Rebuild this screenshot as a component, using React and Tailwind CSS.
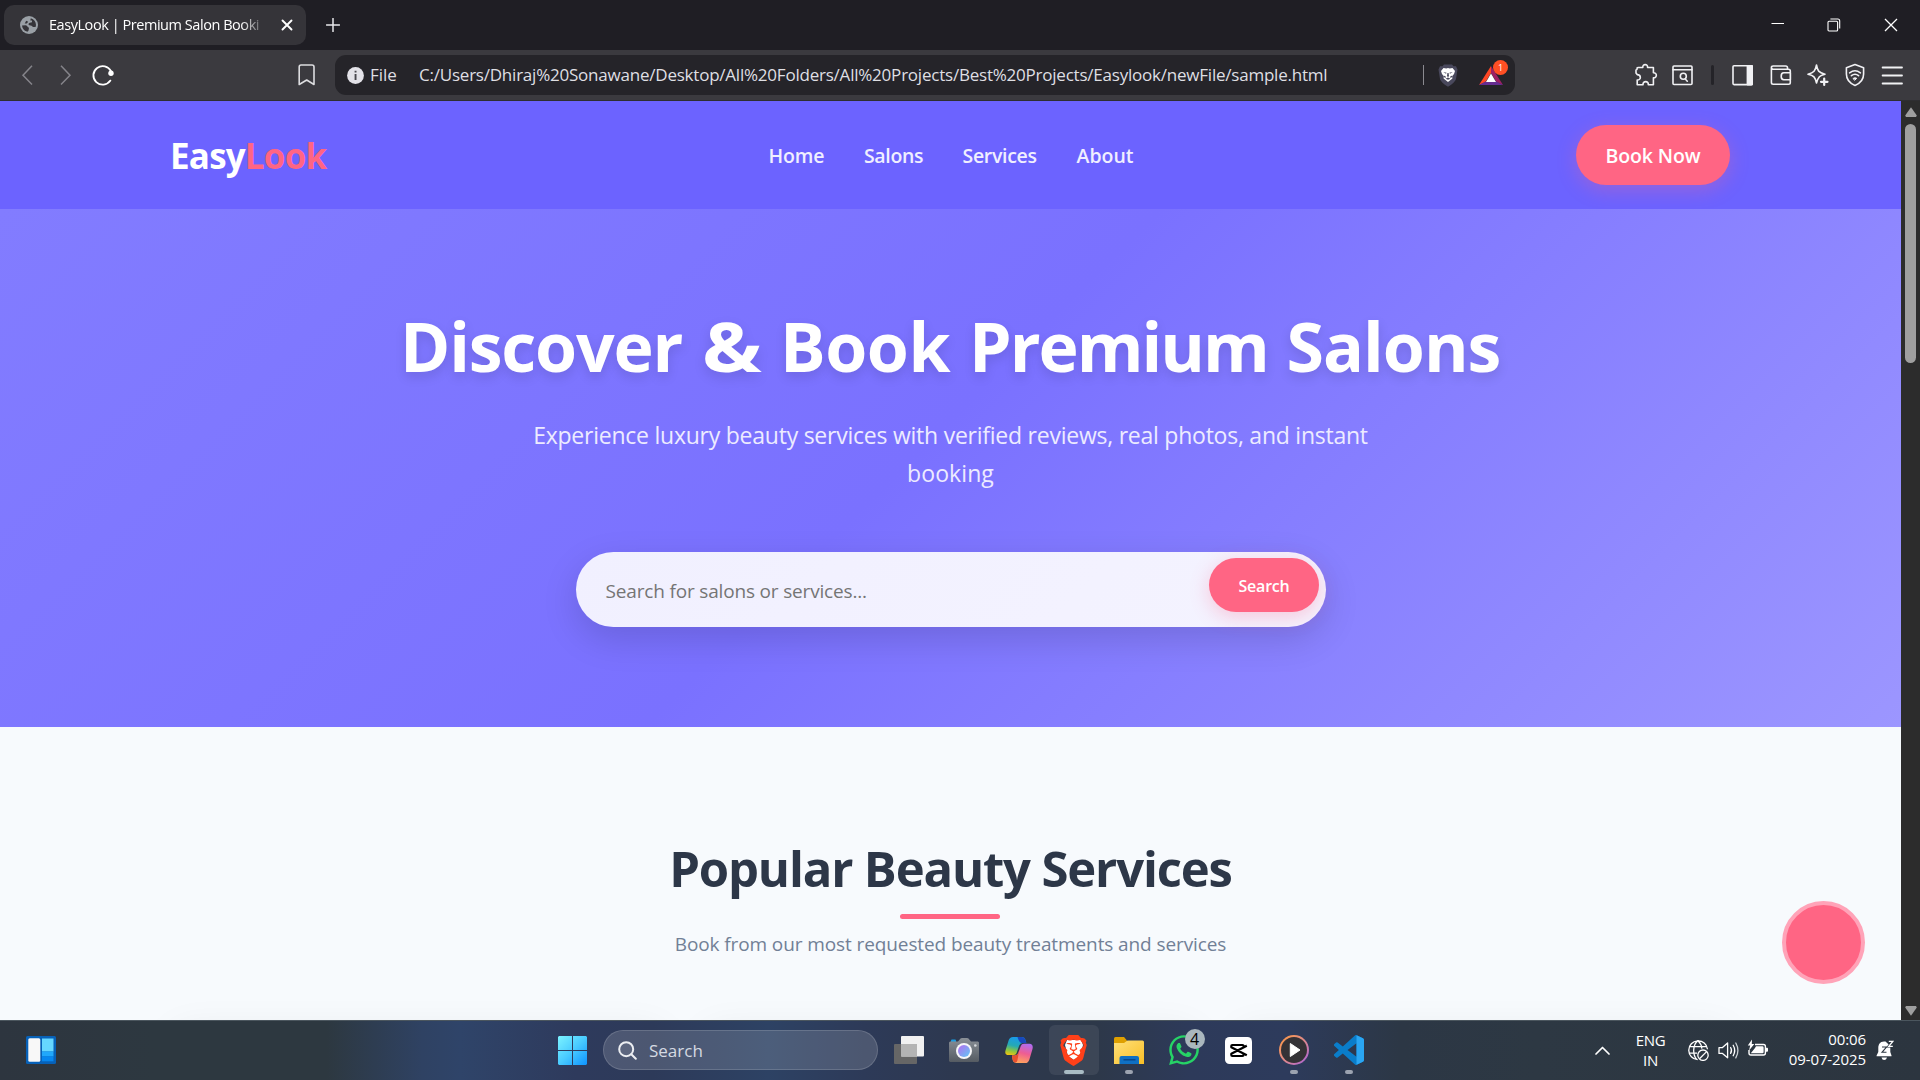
import React from "react";
import { FaWhatsapp } from "react-icons/fa";
import { SiBrave } from "react-icons/si";

const line = { fill: "none", stroke: "#f1f1f4", strokeWidth: 1.6, strokeLinecap: "round", strokeLinejoin: "round" };

function TabStrip() {
  return (
    <div className="flex h-[50px] items-center bg-[#1f1e24] pl-1">
      <div className="flex h-10 w-[302px] items-center rounded-[10px] bg-[#353439] pl-4">
        <svg className="h-[18px] w-[18px] shrink-0" viewBox="0 0 18 18">
          <circle cx="9" cy="9" r="9" fill="#9aa0a6" />
          <path d="M2 9.5 L5.5 9.2 C8 9.5 7 11.3 9 11.6 L8.6 14.2 C8.3 15 7.7 15.8 6.8 15.6 C4 14.7 2.2 12.5 2 9.5 Z M10.8 2.2 C14 3 16 5.6 16 9 L15.6 11 L12.8 11 C12.4 9.6 11 9.7 9.4 9.3 C8 8.8 8.3 7 9.8 6.7 L12 6.3 L12 4.6 L10.3 4.6 Z M6.2 4.7 L8.2 5.8 L6.8 7.6 L4.7 7.4 Z" fill="#353439" />
        </svg>
        <div className="ml-[11px] w-[218px] overflow-hidden text-[14.5px] tracking-[-0.45px] whitespace-nowrap text-white [mask-image:linear-gradient(to_right,black_88%,transparent_100%)]">
          EasyLook | Premium Salon Booki
        </div>
        <svg className="ml-[14px] h-3 w-3" viewBox="0 0 12 12"><path d="M1.5 1.5 10.5 10.5M10.5 1.5 1.5 10.5" {...line} stroke="#fff" strokeWidth="1.9" /></svg>
      </div>
      <svg className="ml-5 h-[14px] w-[14px]" viewBox="0 0 14 14"><path d="M7 .5V13.5M.5 7H13.5" {...line} stroke="#e8e8ea" strokeWidth="1.5" /></svg>
      <div className="ml-auto flex items-center">
        <svg className="mr-[42px] h-[14px] w-[14px]" viewBox="0 0 14 14"><path d="M.5 5.5H13" stroke="#fff" strokeWidth="1" /></svg>
        <svg className="mr-[43px] h-[14px] w-[14px]" viewBox="0 0 14 14" fill="none" stroke="#fff" strokeWidth="1.1"><rect x="1" y="3.2" width="9.6" height="9.8" rx="1" /><path d="M3.4 1H10.8Q12.7 1 12.7 3V10.6" /></svg>
        <svg className="mr-[22px] h-[14px] w-[14px]" viewBox="0 0 14 14"><path d="M1 1 13 13M13 1 1 13" stroke="#fff" strokeWidth="1.3" /></svg>
      </div>
    </div>
  );
}

function ToolbarIcon({ className, children, w = 24 }) {
  return <svg className={className} viewBox={`0 0 ${w} 24`} {...line}>{children}</svg>;
}

function Toolbar() {
  return (
    <div className="flex h-[51px] items-center border-b border-[#2e2e31] bg-[#3b3a3f]">
      <svg className="ml-[21px] h-5 w-3" viewBox="0 0 12 20" fill="none" stroke="#85848a" strokeWidth="1.5"><path d="M11 .8 2 10.2 11 19.4" /></svg>
      <svg className="ml-[27px] h-5 w-3" viewBox="0 0 12 20" fill="none" stroke="#85848a" strokeWidth="1.5"><path d="M1 .8 10 10.2 1 19.4" /></svg>
      <svg className="ml-[19px] h-6 w-6" viewBox="0 0 24 24" fill="none"><path d="M20 8.2A9.3 9.3 0 1 0 19.4 17.6" stroke="#fff" strokeWidth="1.8" strokeLinecap="round" /><circle cx="20" cy="10.3" r="2.7" fill="#fff" /></svg>
      <svg className="ml-[183px] h-[22px] w-[18px]" viewBox="0 0 18 22" {...line}><path d="M3 1H14Q16 1 16 3V20.5L8.7 16 1.2 20.5V3Q1.2 1 3 1Z" stroke="#dddde0" /></svg>
      <div className="ml-[19px] flex h-10 w-[1180px] items-center rounded-[11px] bg-[#252429] pl-3 text-[17px] whitespace-nowrap text-[#dfdfe3]">
        <svg className="h-[17px] w-[17px] shrink-0" viewBox="0 0 17 17"><circle cx="8.5" cy="8.5" r="8.4" fill="#e3e2e8" /><path d="M7.6 3.8H9.5V5.5H7.6ZM7.6 7H9.5V13H7.6Z" fill="#48474d" /></svg>
        <span className="ml-[6px] w-[49px] shrink-0">File</span>
        <span className="w-[909px] tracking-[-0.22px]">C:/Users/Dhiraj%20Sonawane/Desktop/All%20Folders/All%20Projects/Best%20Projects/Easylook/newFile/sample.html</span>
        <span className="ml-[95px] h-5 w-px shrink-0 bg-[#8b8a90]" />
        <svg className="ml-[14px] h-[23px] w-5 shrink-0" viewBox="0 0 20 23">
          <path d="M6 .5H14L15.5 2.3H18L19.5 5.5 18 15Q17 18.5 10 22.7 3 18.5 2 15L.5 5.5 2 2.3H4.5Z" fill="#49485c" />
          <path d="M5.5 4 8.3 4.4 10 4 11.7 4.4 14.5 4 17 7 16 10 14.2 12.2 14.4 14.5 10 18 5.6 14.5 5.8 12.2 4 10 3 7Z" fill="#fff" />
          <path d="M5.3 8 8.6 8.7 8 9.8ZM14.7 8 11.4 8.7 12 9.8ZM9.4 9H10.6L11 12 10 13.2 9 12ZM5.8 11.5 8 12.7 7.8 13.8 5.9 13.2ZM14.2 11.5 12 12.7 12.2 13.8 14.1 13.2ZM7.5 14.8 10 13.6 12.5 14.8 10 15.8Z" fill="#49485c" />
        </svg>
        <span className="relative ml-[21px] h-[30px] w-[30px] shrink-0">
          <svg className="h-[30px] w-[30px]" viewBox="0 0 30 30">
            <path d="M12 6 0 25 6.5 22 12 13Z" fill="#ff4724" /><path d="M12 6 24 25 17.5 22 12 13Z" fill="#9e1f63" /><path d="M0 25H24L17.5 21.5H6.5Z" fill="#662d91" /><path d="M12 13.5 17 22H7Z" fill="#fff" />
          </svg>
          <span className="absolute top-0 left-[14px] flex h-[15px] w-[15px] items-center justify-center rounded-full bg-[#ff4f24] text-[9px] text-white">1</span>
        </span>
      </div>
      <ToolbarIcon className="ml-[119px] h-6 w-6"><path d="M4.5 4.5H8.8C8.4 .6 14 .6 13.6 4.5H19.4V9.8C23.3 9.6 23.3 15 19.4 14.8V21.8H14.3C14.8 17.5 8.6 17.5 9 21.8H3.2V17C7.4 17.2 7.4 11.6 3.2 11.6L2 10V7Q3.2 7 3.2 4.8Z" /></ToolbarIcon>
      <ToolbarIcon className="ml-[13px] h-6 w-6"><rect x="2" y="3" width="19" height="18.5" rx="1" /><path d="M2 6.7H21M14.5 16.3 16.3 18.2" /><circle cx="12.3" cy="13.3" r="3" /></ToolbarIcon>
      <span className="ml-[16px] h-5 w-[3px] rounded bg-[#242328]" />
      <ToolbarIcon className="ml-[17px] h-6 w-6"><rect x="2" y="2.8" width="19.2" height="18.8" rx="1" /><path d="M16.4 2.8H21.2V21.6H16.4Z" fill="#f1f1f4" /></ToolbarIcon>
      <ToolbarIcon className="ml-[14px] h-6 w-6"><path d="M18.5 6V4.8Q18.5 3 16.7 3H4.2Q2.4 3 2.4 4.6V19.6Q2.4 21.3 4.2 21.3H19.6Q21.3 21.3 21.3 19.6V8Q21.3 6.2 19.5 6.2H4Q2.4 6.2 2.4 4.6M21.4 9.8H14.8Q12.2 9.8 12.2 13.2 12.2 16.8 14.8 16.8H21.4Z" /></ToolbarIcon>
      <ToolbarIcon className="ml-[13px] h-6 w-6"><path d="M10.5 2C11.5 8 12.5 9.3 19 11.2 16 12 14.5 12.6 13.4 13.7 12 15.3 11.5 16.5 10.5 20 9 14 8 12.6 2 11.2 8 9.6 9.3 8 10.5 2Z" /><path d="M18.2 15.5V22M15 18.8H21.5" strokeWidth="2.2" /></ToolbarIcon>
      <ToolbarIcon className="ml-[13px] h-6 w-6"><path d="M12 1.6 20.6 4.8V11C20.6 17 17 20.4 12 22.4 7 20.4 3.4 17 3.4 11V4.8Z" /><path d="M6.6 9.8Q12 5.7 17.4 9.8M8.4 12.7Q12 9.8 15.6 12.7" /><path d="M10.2 15.3Q12 14 13.8 15.3L12 17Z" fill="#f1f1f4" strokeWidth="1" /></ToolbarIcon>
      <ToolbarIcon className="ml-[13px] h-6 w-6"><path d="M2.6 4.5H22M2.6 12.5H22M2.6 20.5H22" strokeWidth="1.8" /></ToolbarIcon>
    </div>
  );
}

function Page() {
  return (
    <div className="flex h-[919px] w-[1901px] flex-col overflow-hidden bg-[#f7fafd]">
      <header className="flex h-[108px] shrink-0 items-center justify-between bg-[#6c63ff] pr-[171px] pl-[170px]">
        <div className="w-[157px] text-[35px] leading-none font-bold tracking-[-0.8px] text-white">Easy<span className="text-[#ff6584]">Look</span></div>
        <nav className="flex gap-10 pt-[2px] text-[19.5px] font-semibold text-[#f0efff]">
          <a className="w-[55.5px] tracking-[-0.1px]">Home</a>
          <a className="w-[58.5px] tracking-[-0.35px]">Salons</a>
          <a className="w-[74px] tracking-[-0.3px]">Services</a>
          <a className="w-[58px]">About</a>
        </nav>
        <button className="h-[60px] w-[154px] rounded-full bg-[#ff6584] pt-[2px] text-[19.5px] font-semibold tracking-[-0.1px] text-white shadow-[0_5px_19px_rgba(255,101,132,0.3)]">Book Now</button>
      </header>
      <section className="flex h-[518px] shrink-0 flex-col items-center bg-[linear-gradient(135deg,#827cff_0%,#7a71ff_48%,#9c96ff_100%)] pt-[95px]">
        <h1 className="ml-[5px] flex w-[1106px] text-[68px] leading-[84px] font-bold whitespace-nowrap text-white [text-shadow:0_5px_12px_rgba(0,0,0,0.12)]">
          <span className="w-[302px] tracking-[-1.2px]">Discover </span>
          <span className="w-[78px]"><span className="inline-block origin-left scale-x-[1.17]">&amp;</span> </span>
          <span className="w-[189px] tracking-[-0.5px]">Book </span>
          <span className="w-[317.5px] tracking-[-2px]">Premium </span>
          <span className="w-[219px] tracking-[-1px]">Salons</span>
        </h1>
        <p className="mt-[28px] w-[875px] text-center text-[23px] leading-[38px] tracking-[-0.24px] text-[#edebff]">Experience luxury beauty services with verified reviews, real photos, and instant <span className="tracking-[0.1px]">booking</span></p>
        <div className="mt-[60px] flex h-[75px] w-[750px] justify-between rounded-full bg-[linear-gradient(135deg,#f1f0ff,#f4f3ff)] pt-[6px] pr-[7px] pl-[30px] shadow-[0_12px_36px_rgba(0,0,0,0.14)]">
          <span className="pt-[3px] text-[19px] leading-[60px] tracking-[-0.17px] text-[#757575]">Search for salons or services...</span>
          <button className="h-[54px] w-[110px] rounded-full bg-[#ff6584] pt-px pl-px text-[16px] font-semibold tracking-[-0.2px] text-white shadow-[0_5px_19px_rgba(255,101,132,0.3)]">Search</button>
        </div>
      </section>
      <section className="flex flex-col items-center pt-[111px]">
        <h2 className="text-[49px] leading-[60px] font-bold tracking-[-1.14px] text-[#2d3748]">Popular Beauty Services</h2>
        <div className="mt-4 mr-px h-[5px] w-[100px] rounded-full bg-[#ff6584]" />
        <p className="mt-[10px] text-[19px] leading-[30px] tracking-[-0.1px] text-[#718096]">Book from our most requested beauty treatments and services</p>
        <div className="mt-[61px] grid w-[1558px] grid-cols-3 gap-10">
          <div className="h-40 rounded-2xl bg-white shadow-[0_12px_38px_rgba(0,0,0,0.08)]" />
          <div className="h-40 rounded-2xl bg-white shadow-[0_12px_38px_rgba(0,0,0,0.08)]" />
          <div className="h-40 rounded-2xl bg-white shadow-[0_12px_38px_rgba(0,0,0,0.08)]" />
        </div>
      </section>
    </div>
  );
}

function Scrollbar() {
  return (
    <div className="flex w-[19px] flex-col items-center bg-[#2c2c2c] pt-[6px] pb-[4px]">
      <svg className="h-[10px] w-3" viewBox="0 0 12 10"><path d="M6 .3 11.8 8.5 11 10H1L.2 8.5Z" fill="#9f9f9f" /></svg>
      <div className="mt-[7px] h-[239px] w-[11px] rounded-full bg-[#9f9f9f]" />
      <svg className="mt-auto h-[10px] w-3" viewBox="0 0 12 10"><path d="M6 9.7 11.8 1.5 11 0H1L.2 1.5Z" fill="#9f9f9f" /></svg>
    </div>
  );
}

function TaskbarApp({ children, open, active }) {
  return (
    <div className={active ? "relative mx-[2.5px] flex h-[50px] w-[50px] items-center justify-center rounded-md bg-white/[0.07]" : "relative mx-[2.5px] flex h-[50px] w-[50px] items-center justify-center"}>
      {children}
      {open && <span className={active ? "absolute bottom-px h-1 w-5 rounded-full bg-[#a9bcc4]" : "absolute bottom-px h-1 w-2 rounded-full bg-[#9ca3b0]"} />}
    </div>
  );
}

function Taskbar() {
  return (
    <div className="flex h-[60px] items-center border-t border-[#4b565e] bg-[linear-gradient(90deg,#2d353f_0%,#2d3840_8%,#2d3840_17%,#2f4263_22%,#2f4469_24%,#2e3a5c_30%,#2d3a59_34%,#2d4264_40%,#2d3a58_45%,#2d384f_50%,#2d3849_57%,#2d3a5a_62%,#2d3b5c_67%,#2c3745_73%,#2d3843_80%,#2c353f_100%)] pb-px text-white">
      <svg className="ml-[26px] h-7 w-[30px]" viewBox="0 0 30 28">
        <rect width="30" height="28" rx="1.5" fill="#0761b8" /><rect x="2.3" y="2.3" width="12" height="23.4" rx="1.5" fill="#f8f8f8" /><path d="M16 2.5H27.5V15.5H16Z" fill="#66d7ff" /><path d="M16 15.5H27.5V20.5H16Z" fill="#21a8fb" /><path d="M16 20.5H27.5V25.3H16Z" fill="#0787ef" />
      </svg>
      <svg className="ml-[502px] h-[29px] w-[29px]" viewBox="0 0 29 29">
        <defs><linearGradient id="win" x1="0" y1="0" x2="29" y2="29" gradientUnits="userSpaceOnUse"><stop stopColor="#7cf3ff" /><stop offset=".5" stopColor="#49cbff" /><stop offset="1" stopColor="#0e93ff" /></linearGradient></defs>
        <path d="M1 0H14V14H0V1ZM15 0H28L29 1V14H15ZM0 15H14V29H1L0 28ZM15 15H29V28L28 29H15Z" fill="url(#win)" />
      </svg>
      <div className="ml-4 flex h-10 w-[275px] items-center rounded-full border border-white/15 bg-white/15 pt-px pl-[14px] text-[17px] text-[#d5dae2]">
        <svg className="mr-3 h-[19px] w-[19px]" viewBox="0 0 19 19" fill="none" stroke="#eceef2" strokeWidth="2" strokeLinecap="round"><circle cx="8.2" cy="8.2" r="7" fill="#ffffff18" /><path d="M13.3 13.3 17.8 17.8" /></svg>
        Search
      </div>
      <div className="ml-[3px] flex">
        <TaskbarApp>
          <svg className="h-7 w-[30px]" viewBox="0 0 30 28"><rect y="8" width="23" height="20" rx="1" fill="#666" /><rect x="7" width="23" height="20.5" rx="1" fill="#f1f1f1" /><path d="M7 8H23V20.5H7Z" fill="#b4b4b4" /></svg>
        </TaskbarApp>
        <TaskbarApp>
          <svg className="h-6 w-[30px]" viewBox="0 0 30 24">
            <defs><linearGradient id="cam" x1="0" y1="0" x2="1" y2="1"><stop stopColor="#b56cf0" /><stop offset="1" stopColor="#60c8f5" /></linearGradient><linearGradient id="camb" x1="0" y1="0" x2="0" y2="1"><stop stopColor="#8a9097" /><stop offset="1" stopColor="#555b62" /></linearGradient></defs>
            <rect x="2" y="1.5" width="5" height="4" rx="1" fill="#1b9de2" /><path d="M1 3.5H9L11.5 .5Q12 0 13 0H18Q19 0 19.5 .5L22 3.5H29L30 4.5V23L29 24H1L0 23V4.5Z" fill="url(#camb)" />
            <circle cx="15" cy="13" r="8" fill="#f6f6f8" /><circle cx="15" cy="13" r="6" fill="url(#cam)" /><circle cx="26.3" cy="7.5" r="1.3" fill="#d5d8dc" />
          </svg>
        </TaskbarApp>
        <TaskbarApp>
          <svg className="h-[26px] w-7" viewBox="0 0 28 26">
            <defs><linearGradient id="cpa" x1="8" y1="0" x2="4" y2="18" gradientUnits="userSpaceOnUse"><stop stopColor="#199be8" /><stop offset=".45" stopColor="#25a9b4" /><stop offset=".75" stopColor="#8cc63f" /><stop offset="1" stopColor="#f1c40f" /></linearGradient><linearGradient id="cpb" x1="22" y1="7" x2="17" y2="26" gradientUnits="userSpaceOnUse"><stop stopColor="#b06cf0" /><stop offset=".5" stopColor="#ee5d92" /><stop offset="1" stopColor="#ffa25f" /></linearGradient></defs>
            <path d="M8 0H17Q19.6 0 20.4 2.7L21.3 6H17.5Q15 6 14.2 8.6L11.6 16Q11 18 9 18H3.5Q-.6 18 .5 13.5L3.6 3.6Q4.6 0 8 0Z" fill="url(#cpa)" />
            <path d="M13.5 0H17Q19.6 0 20.4 2.7L21.3 6H16.5Q14 5.5 12.5 0Z" fill="#1849bd" />
            <path d="M20 26H11Q8.4 26 7.7 23.3L7 18.5H10Q12.6 18 13.4 15.4L15.8 9Q16.6 6.8 19 6.8H24.5Q28.6 7 27.5 12L24.4 22.4Q23.4 26 20 26Z" fill="url(#cpb)" />
            <path d="M7 18.5H10Q12.6 18 13.4 15.4L14 14 12.5 23Q12 26 9.5 25.5 7.5 24 7 18.5Z" fill="#e8502f" />
          </svg>
        </TaskbarApp>
        <TaskbarApp open active>
          <span className="relative flex h-[31px] w-[28px] items-center justify-center">
            <svg className="absolute h-[22px] w-[20px]" viewBox="0 0 20 22"><path d="M3 1H17L19 6 16 17 10 21 4 17 1 6Z" fill="#fff" /></svg>
            <SiBrave className="relative h-[31px] w-[31px] shrink-0 text-[#ff4019]" />
          </span>
        </TaskbarApp>
        <TaskbarApp open>
          <svg className="h-[27px] w-[30px]" viewBox="0 0 30 27">
            <defs><linearGradient id="fol" x1="0" y1="0" x2="1" y2="1"><stop stopColor="#ffe07a" /><stop offset="1" stopColor="#f9bf26" /></linearGradient></defs>
            <path d="M0 1.5Q0 0 1.5 0H10L13 3.5V8H0Z" fill="#dfa000" /><path d="M0 6H10L13.5 3.5H28.5Q30 3.5 30 5V27H0Z" fill="url(#fol)" /><path d="M5.5 27V21Q5.5 19 7.5 19H23Q25 19 25 21V27Z" fill="#0f70c4" /><path d="M9.5 22.8H21.5" stroke="#07458a" strokeWidth="1.4" />
          </svg>
        </TaskbarApp>
        <TaskbarApp>
          <FaWhatsapp className="h-[34px] w-[34px] text-[#26d366]" />
          <span className="absolute top-[4px] left-[26px] flex h-5 w-5 items-center justify-center rounded-full bg-[#aab7bd] text-[16px] leading-none text-black">4</span>
        </TaskbarApp>
        <TaskbarApp>
          <svg className="h-[27px] w-[27px]" viewBox="0 0 27 27"><rect width="27" height="27" rx="4.5" fill="#fff" /><path d="M21.8 8.7 18.5 10.3V9Q18.5 8 17.5 8H7.3Q6.3 8 6.3 9V10.2L21.8 18.3M21.8 8.7 6.3 16.8V18Q6.3 19 7.3 19H17.5Q18.5 19 18.5 18V16.7" fill="none" stroke="#000" strokeWidth="2.2" strokeLinejoin="round" /></svg>
        </TaskbarApp>
        <TaskbarApp open>
          <svg className="h-[30px] w-[30px]" viewBox="0 0 30 30">
            <defs><linearGradient id="med" x1="0" y1="0" x2="1" y2="1"><stop stopColor="#ff9a3c" /><stop offset=".5" stopColor="#e08a8a" /><stop offset="1" stopColor="#a45fe0" /></linearGradient></defs>
            <circle cx="15" cy="15" r="15" fill="url(#med)" /><circle cx="15" cy="15" r="13" fill="#343236" /><path d="M11.3 8.5 21 15 11.3 21.5Z" fill="#fff" stroke="#fff" strokeLinejoin="round" />
          </svg>
        </TaskbarApp>
        <TaskbarApp open>
          <svg className="h-[30px] w-[30px]" viewBox="0 0 24 24">
            <path fill="#0a7dca" d="M23.15 2.587L18.21.21a1.494 1.494 0 0 0-1.705.29l-9.46 8.63-4.12-3.128a.999.999 0 0 0-1.276.057L.327 7.261A1 1 0 0 0 .326 8.74L3.899 12 .326 15.26a1 1 0 0 0 .001 1.479L1.65 17.94a.999.999 0 0 0 1.276.057l4.12-3.128 9.46 8.63a1.492 1.492 0 0 0 1.704.29l4.942-2.377A1.5 1.5 0 0 0 24 20.06V3.939a1.5 1.5 0 0 0-.85-1.352zm-5.146 14.861L10.826 12l7.178-5.448v10.896z" />
            <path fill="#2aa6f3" d="M18.004 .15 23.15 2.587A1.5 1.5 0 0 1 24 3.939V20.06a1.5 1.5 0 0 1-.85 1.352L18.004 23.85Z" />
          </svg>
        </TaskbarApp>
      </div>
      <svg className="ml-[219px] h-[9px] w-[15px]" viewBox="0 0 15 9" fill="none" stroke="#fff" strokeWidth="1.7" strokeLinecap="round" strokeLinejoin="round"><path d="M1 8 7.5 1.5 14 8" /></svg>
      <div className="-mt-px ml-[25px] w-[31px] text-center text-[15px] leading-5 tracking-[-0.3px]">ENG<br />IN</div>
      <svg className="ml-[22px] h-[21px] w-[21px]" viewBox="0 0 21 21" fill="none" stroke="#fff" strokeWidth="1.3">
        <path d="M9.7 19.6A9.4 9.4 0 1 1 19.5 9.2M1 6.6H18.5M1 13.2H9M9.8 .8C4.5 5 4.5 15 8.8 19.5M10 .8C12.4 3 13.6 5.5 13.9 8.6" /><circle cx="15" cy="15.2" r="5.2" /><path d="M11.5 18.8 18.6 11.6" />
      </svg>
      <svg className="ml-[9px] h-[19px] w-[21px]" viewBox="0 0 21 19" fill="none" stroke="#fff" strokeWidth="1.3" strokeLinecap="round" strokeLinejoin="round">
        <path d="M1 6.6H4.5L9.6 2V16.8L4.5 12.4H1ZM12.6 6.5Q14.4 9.4 12.6 12.4M15.2 4.2Q18.2 9.4 15.2 14.7" /><path d="M17.8 2Q22 9.4 17.8 16.9" stroke="#cbd0d4" />
      </svg>
      <svg className="-mt-[2px] ml-[8px] h-[20px] w-[22px]" viewBox="0 0 22 20">
        <path d="M8 5.5H16.5Q18.4 5.5 18.4 7.4V14Q18.4 16 16.5 16H4Q2 16 2 14V11" fill="none" stroke="#fff" strokeWidth="1.4" /><path d="M19 8.8H20.2Q21 8.8 21 10V11.6Q21 12.8 20.2 12.8H19Z" fill="#fff" /><path d="M9 7.3H15.4Q16.6 7.3 16.6 8.4V13Q16.6 14.2 15.4 14.2H3.8L8 9Z" fill="#fff" /><path d="M5 .5 .8 6.5H3.2L2 11.5 7.3 5H4.8Z" fill="#fff" />
      </svg>
      <div className="-mt-[3px] ml-[17px] w-[80px] text-right text-[15px] leading-5 tracking-[-0.1px]">00:06<br />09-07-2025</div>
      <svg className="ml-[10px] h-[21px] w-[18px]" viewBox="0 0 18 21">
        <path d="M8 1.5C3.8 1.5 2.3 4.8 2.3 8V12L.6 15.4V16.2H15.5V15.4L14.3 12V6L9.5 1.6Z" fill="#fff" /><path d="M5.5 17.5H11Q10.2 20 8.2 20 6.2 20 5.5 17.5Z" fill="#fff" /><path d="M6 7H10.5L6 12.3H10.5" fill="none" stroke="#2d3741" strokeWidth="1.1" /><path d="M12.8 1.4H16.8L12.8 6.3H16.8" fill="none" stroke="#2d3741" strokeWidth="2.6" /><path d="M12.8 1.4H16.8L12.8 6.3H16.8" fill="none" stroke="#fff" strokeWidth="1.3" />
      </svg>
    </div>
  );
}

export default function App() {
  return (
    <div className="relative flex h-[1080px] w-[1920px] flex-col overflow-hidden font-['Open_Sans','Noto_Sans',sans-serif]">
      <TabStrip />
      <Toolbar />
      <div className="flex h-[919px]">
        <Page />
        <Scrollbar />
      </div>
      <Taskbar />
      <div className="absolute top-[901px] left-[1782px] h-[83px] w-[83px] rounded-full border-4 border-[#ffa3b8] bg-[#ff6584]" />
    </div>
  );
}
